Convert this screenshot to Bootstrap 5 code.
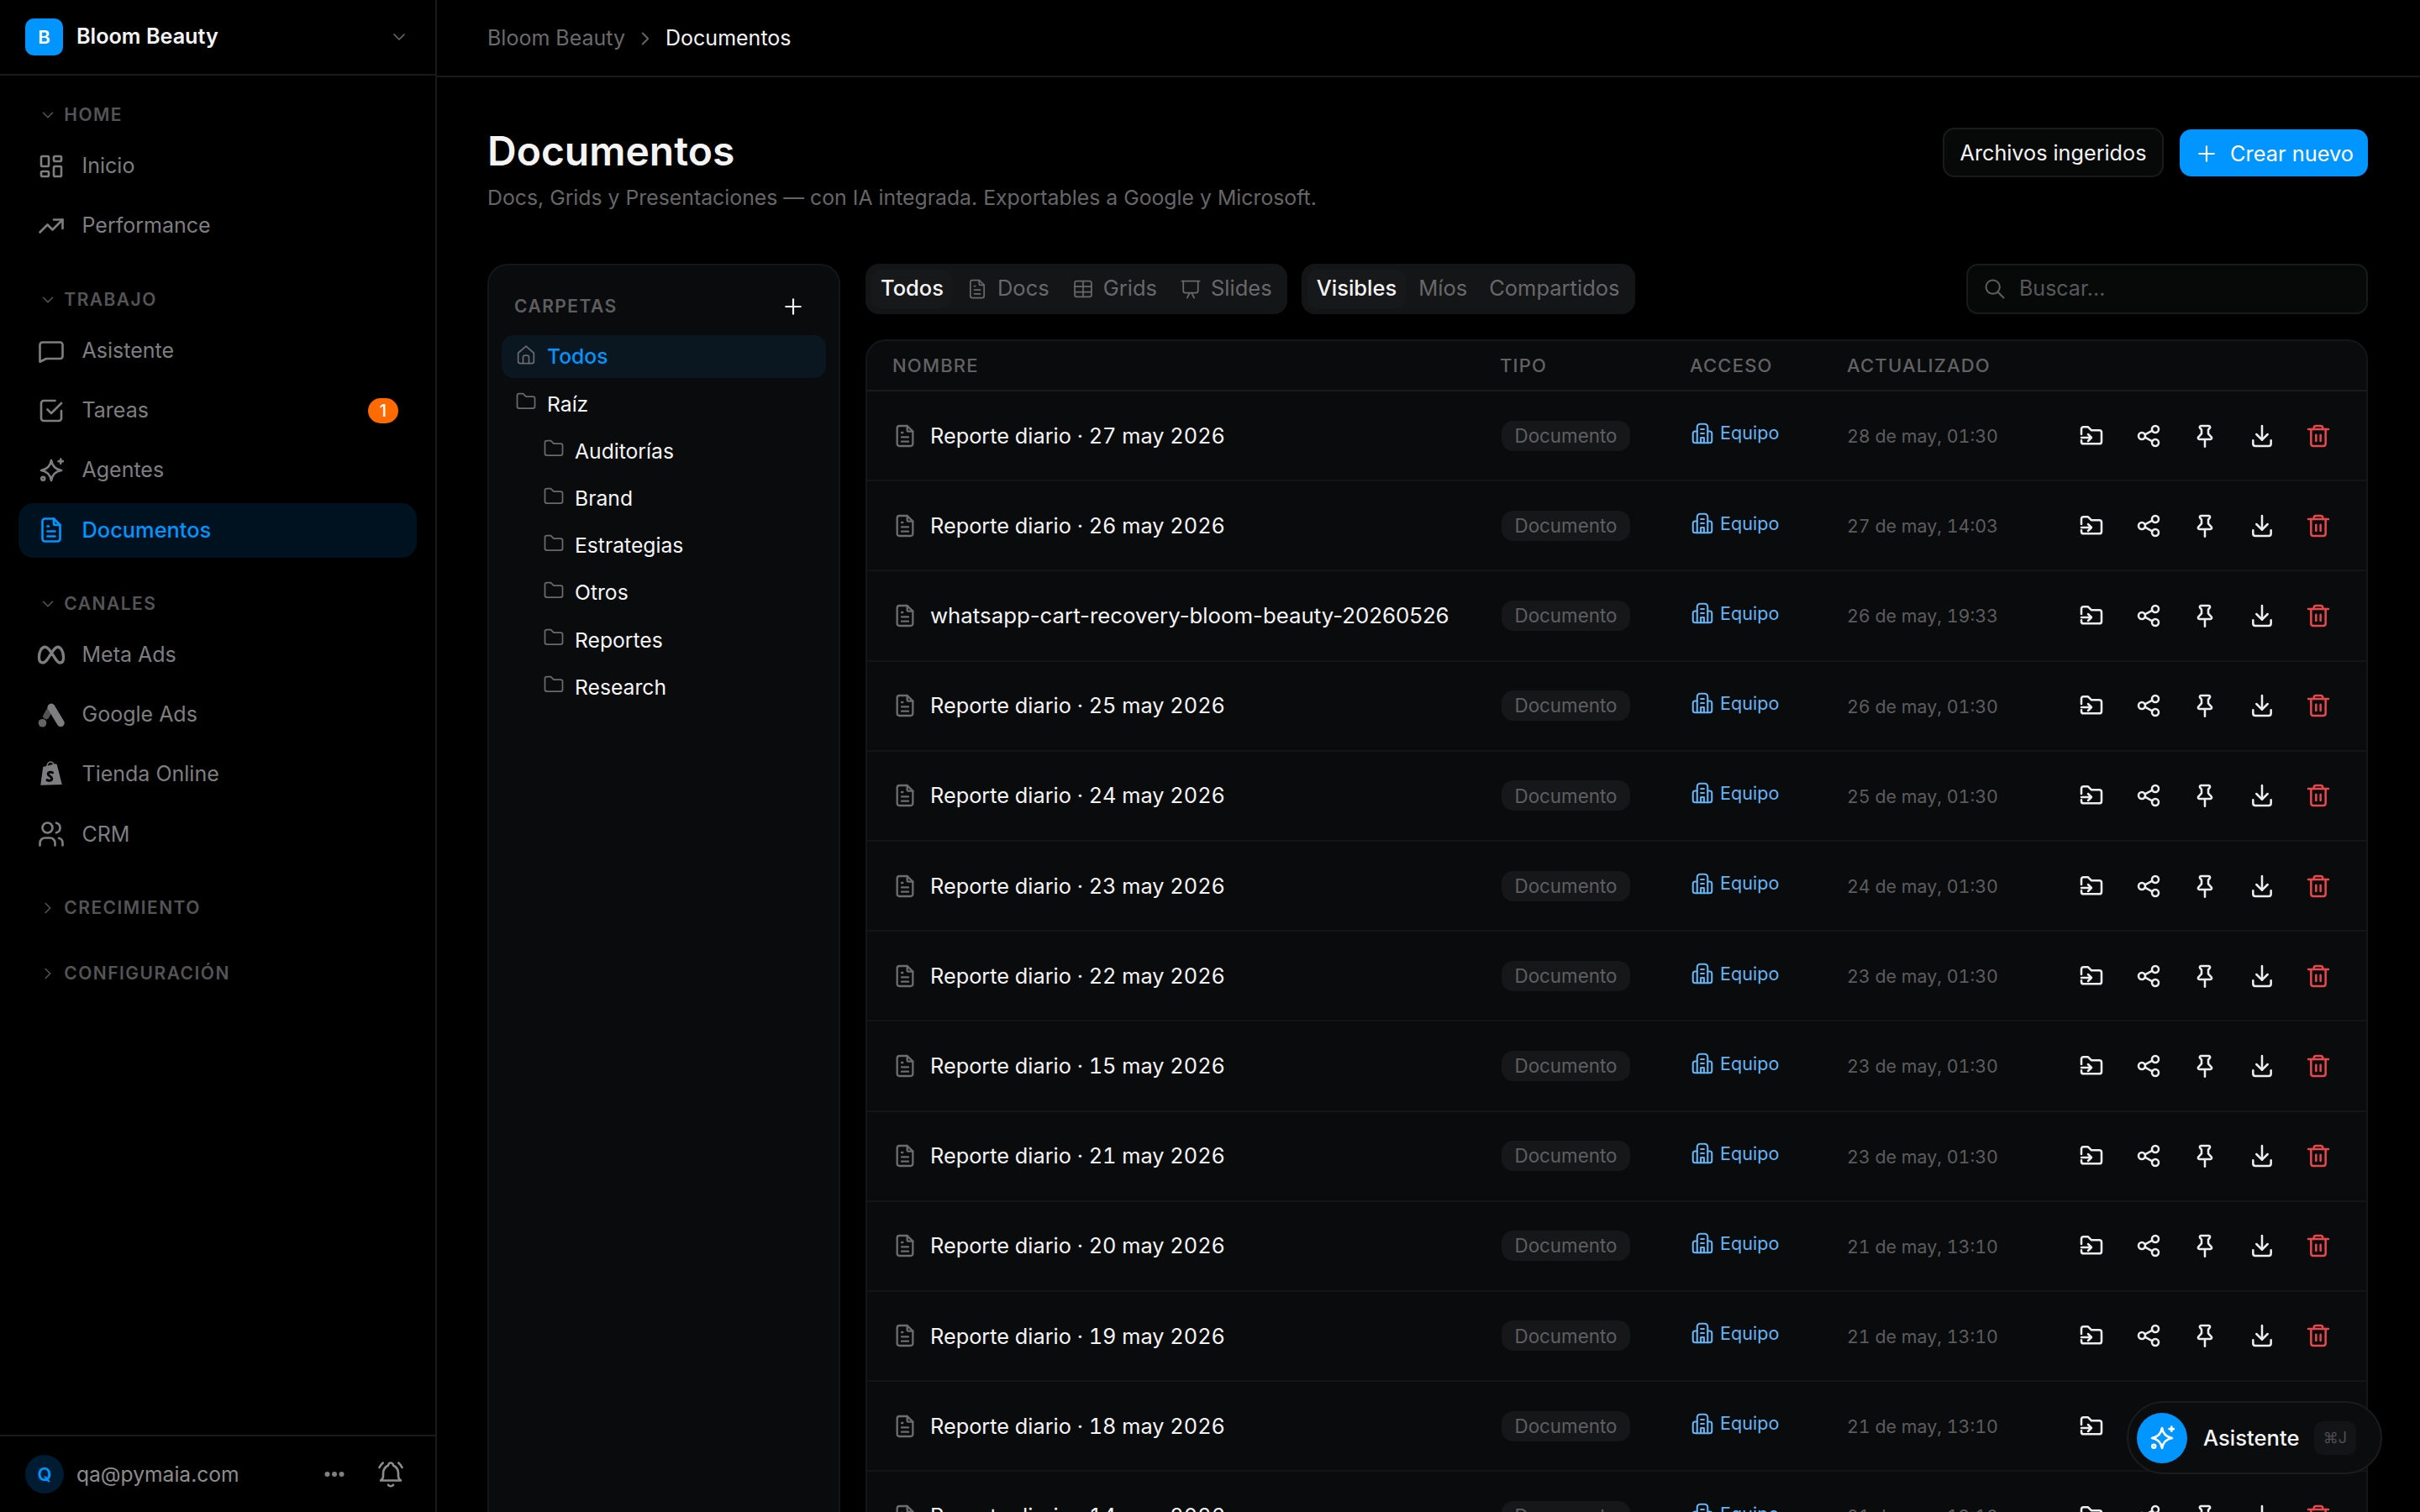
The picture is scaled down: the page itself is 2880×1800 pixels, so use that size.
<!DOCTYPE html>
<html lang="es">
<head>
  <meta charset="UTF-8" />
  <title>Documentos - Bloom Beauty</title>
  <link rel="stylesheet" href="https://cdn.jsdelivr.net/npm/bootstrap@5.3.0/dist/css/bootstrap.min.css"/>
  <style>
    :root {
      --line: #1a1a1b;
      --panel: #0a0b0d;
      --blue: #0095ff;
      --muted: #666668;
    }
    html, body { background: #000; }
    body {
      font-family: Inter, "Liberation Sans", sans-serif;
      color: #f4f4f5;
      font-size: 26px;
      height: 100vh;
      overflow: hidden;
    }
    .ico {
      width: 36px; height: 36px; flex: none;
      fill: none; stroke: currentColor; stroke-width: 1.75;
      stroke-linecap: round; stroke-linejoin: round;
    }

    /* sidebar */
    .side { width: 520px; flex: none; border-right: 2px solid var(--line); }
    .brand-bar { height: 90px; flex: none; padding: 0 31px 0 30px; border-bottom: 2px solid var(--line); }
    .brand-logo {
      width: 45px; height: 44px; border-radius: 10px; background: var(--blue);
      font-size: 22px; font-weight: 600; color: #fff;
    }
    .brand-name { font-size: 25.2px; font-weight: 600; margin-left: 16px; }
    .side-nav { padding: 27px 22px 0; }
    .nav-group + .nav-group { margin-top: 35px; }
    .nav-group.pushed { margin-top: 38px; }
    .group-label {
      height: 40px; padding-left: 24px; gap: 8.3px; margin-bottom: 8.5px;
      color: #545456; font-size: 21px; font-weight: 600; letter-spacing: .07em;
    }
    .group-label .ico { width: 22px; height: 22px; }
    .side-item {
      height: 65px; padding: 0 21px; gap: 18.5px; margin-bottom: 6.2px;
      border-radius: 18px; color: #7e7e80; font-size: 25px; text-decoration: none;
    }
    .side-item.on { background: #00121f; color: var(--blue); font-weight: 500; font-size: 25.4px; }
    .count-pill {
      width: 36px; height: 30px; border-radius: 15px; background: #ff6b00;
      color: #fff; font-size: 20px; font-weight: 500; margin-right: 1px;
    }
    .side-foot { height: 92px; flex: none; padding: 0 35px 0 30px; border-top: 2px solid var(--line); color: #8c8c8e; font-size: 24.6px; }
    .user-dot {
      width: 46px; height: 46px; border-radius: 50%; background: #001c33;
      color: var(--blue); font-size: 22px; font-weight: 600; margin-right: 15px;
    }
    .more-dots { margin-right: 37px; }

    /* top */
    .crumbs { height: 92px; flex: none; padding: 1px 60px 0; border-bottom: 2px solid var(--line); font-size: 25px; gap: 11px; }
    .crumbs .ico { width: 26px; height: 26px; color: #666; }
    .page-body { padding: 60px 62px 0 60px; }
    .page-title { font-size: 48px; font-weight: 600; line-height: 56px; margin: 0 0 9px; }
    .page-sub { font-size: 24.8px; color: var(--muted); margin: 0; line-height: 36px; }
    .btn-ghost, .btn-create {
      line-height: 1; border-radius: 14px; padding: 2px 0 0;
      display: inline-flex; align-items: center; justify-content: center; white-space: nowrap;
    }
    .btn-ghost { height: 59px; width: 263px; font-size: 25.2px; background: #070909; border: 2px solid var(--line); color: #f4f4f5; }
    .btn-create { height: 56px; width: 224px; font-size: 25.4px; background: var(--blue); border: 0; color: #fff; gap: 13px; }
    .btn-create .ico { width: 30px; height: 30px; }

    /* carpetas */
    .folders-panel {
      width: 420px; flex: none; background: var(--panel);
      border: 2px solid #151618; border-bottom: 0; border-radius: 24px 24px 0 0;
      padding: 0 15px;
    }
    .folders-head { height: 83px; padding: 16px 24px 0 15px; color: #5e5e60; font-size: 21px; font-weight: 600; letter-spacing: .07em; }
    .folders-head .ico { width: 30px; height: 30px; color: #f4f4f5; }
    .folder-row { height: 51px; margin-bottom: 5.2px; padding: 2px 0 0 15px; gap: 11px; border-radius: 14px; font-size: 24.7px; }
    .folder-row .ico { width: 28px; height: 28px; color: #6a6a6c; stroke-width: 1.5; margin-top: -6px; }
    .folder-row.on { background: #0a1620; color: var(--blue); font-weight: 500; }
    .folder-row.sub { padding-left: 48px; }

    /* filtros */
    .seg-group { height: 60px; padding: 0 7px; gap: 7px; background: #141517; border-radius: 16px; }
    .seg-group.tight { gap: 4px; margin-left: 17px; }
    .seg-btn { height: 46px; padding: 0 11px; gap: 10px; border-radius: 12px; color: #68686a; font-size: 25.5px; }
    .seg-btn .ico { width: 28px; height: 28px; margin-left: -3px; stroke-width: 1.5; }
    .seg-btn.on { background: #17181a; color: #f4f4f5; font-weight: 500; }
    .search-box {
      width: 478px; height: 60px; padding: 0 18px; gap: 13px;
      background: #070909; border: 2px solid var(--line); border-radius: 14px;
    }
    .search-box .ico { width: 28px; height: 28px; color: #5e5e60; }
    .search-box input { background: transparent; border: 0; outline: 0; color: #fff; font-size: 25px; width: 100%; padding-top: 2px; }
    .search-box input::placeholder { color: #58585a; }

    /* tabla */
    .docs-wrap { background: var(--panel); border: 2px solid #151618; border-bottom: 0; border-radius: 24px 24px 0 0; margin-top: 30px; }
    .doc-line { display: grid; grid-template-columns: 753px 226px 187px 257px 1fr; align-items: center; }
    .doc-head { height: 60.5px; padding-top: 2px; border-bottom: 2px solid var(--line); color: #626264; font-size: 22px; font-weight: 500; letter-spacing: .055em; }
    .doc-head > div:first-child { padding-left: 30px; }
    .doc-row { height: 107.2px; border-bottom: 2px solid #141517; }
    .doc-name { padding-left: 29px; gap: 14px; font-size: 25.8px; }
    .doc-name.tabular { font-size: 25.3px; font-variant-numeric: tabular-nums; }
    .doc-name .ico { width: 32px; height: 32px; color: #6d6d6f; }
    .type-pill { width: 153px; height: 36px; margin-left: 2px; border-radius: 14px; background: #161718; color: #5f5f61; font-size: 22.4px; }
    .access-tag { gap: 6px; color: #62b4f5; font-size: 21.6px; margin-top: -6px; }
    .access-tag .ico { width: 30px; height: 30px; stroke-width: 1.7; }
    .doc-date { color: #5c5c5e; font-size: 21.4px; font-variant-numeric: tabular-nums; padding-top: 1px; }
    .doc-tools { padding-left: 8px; gap: 15.5px; }
    .tool-btn { width: 52px; height: 52px; color: #eeeeef; }
    .tool-btn .ico { width: 32px; height: 32px; stroke-width: 1.9; }
    .tool-btn.del { color: #e5484d; }

    /* asistente flotante */
    .assistant-fab {
      position: fixed; left: 2531px; top: 1668px; width: 304px; height: 87px;
      padding: 0 30px 0 10px; background: #0b0c0e; border: 2px solid #1b1c1e; border-radius: 44px;
    }
    .assistant-fab .fab-dot { width: 60px; height: 60px; border-radius: 50%; background: var(--blue); color: #fff; margin-right: 19px; }
    .assistant-fab .fab-dot .ico { width: 36px; height: 36px; }
    .assistant-fab span.fab-text { font-size: 25.6px; font-weight: 500; padding-top: 2px; }
    .fab-key {
      width: 50px; height: 40px; margin-left: auto; margin-right: -1px; border-radius: 10px;
      background: #131416; color: #4e4e50; font-size: 18px;
    }
  </style>
</head>
<body>
  <svg class="d-none" xmlns="http://www.w3.org/2000/svg">
    <symbol id="i-down" viewBox="0 0 24 24"><path d="M6 9l6 6l6 -6"/></symbol>
    <symbol id="i-right" viewBox="0 0 24 24"><path d="M9 6l6 6l-6 6"/></symbol>
    <symbol id="i-dash" viewBox="0 0 24 24"><path d="M5 4h4a1 1 0 0 1 1 1v6a1 1 0 0 1 -1 1h-4a1 1 0 0 1 -1 -1v-6a1 1 0 0 1 1 -1"/><path d="M5 16h4a1 1 0 0 1 1 1v2a1 1 0 0 1 -1 1h-4a1 1 0 0 1 -1 -1v-2a1 1 0 0 1 1 -1"/><path d="M15 12h4a1 1 0 0 1 1 1v6a1 1 0 0 1 -1 1h-4a1 1 0 0 1 -1 -1v-6a1 1 0 0 1 1 -1"/><path d="M15 4h4a1 1 0 0 1 1 1v2a1 1 0 0 1 -1 1h-4a1 1 0 0 1 -1 -1v-2a1 1 0 0 1 1 -1"/></symbol>
    <symbol id="i-trend" viewBox="0 0 24 24"><path d="M3 17l6 -6l4 4l8 -8"/><path d="M14 7h7v7"/></symbol>
    <symbol id="i-chat" viewBox="0 0 24 24"><path d="M5 5h14a2 2 0 0 1 2 2v9a2 2 0 0 1 -2 2h-11l-5 2.500v-13.500a2 2 0 0 1 2 -2z"/></symbol>
    <symbol id="i-check" viewBox="0 0 24 24"><path d="M9 11l3 3l8 -8"/><path d="M20 12v6a2 2 0 0 1 -2 2h-12a2 2 0 0 1 -2 -2v-12a2 2 0 0 1 2 -2h9"/></symbol>
    <symbol id="i-spark" viewBox="0 0 24 24"><path d="M12 4c.8 4.800 3.200 7.200 8 8c-4.800 .8 -7.200 3.200 -8 8c-.8 -4.800 -3.200 -7.200 -8 -8c4.800 -.8 7.200 -3.200 8 -8z"/><path d="M19.500 3v3.500M17.750 4.750h3.500"/><circle cx="5.500" cy="18.500" r="1.300"/></symbol>
    <symbol id="i-doc" viewBox="0 0 24 24"><path d="M14 3v4a1 1 0 0 0 1 1h4"/><path d="M17 21h-10a2 2 0 0 1 -2 -2v-14a2 2 0 0 1 2 -2h7l5 5v11a2 2 0 0 1 -2 2z"/><path d="M9 9h1M9 13h6M9 17h6"/></symbol>
    <symbol id="i-meta" viewBox="0 0 24 24"><path stroke-width="2.200" d="M12 10c-1.800 -3 -3.300 -4.500 -5 -4.500c-2.800 0 -4.700 4 -4.700 8.200c0 2.800 1.300 4.300 3.100 4.300c2 0 3.600 -2.500 6.600 -7.500c2.200 -3.500 3.500 -5 5.100 -5c2.700 0 4.600 4 4.600 8.500c0 2.600 -1.200 4 -2.900 4c-1.800 0 -3.300 -2.500 -6.800 -8.500z"/></symbol>
    <symbol id="i-gads" viewBox="0 0 24 24"><path stroke-width="6" d="M12 6l7.500 12.500"/><path stroke-width="5" opacity=".65" d="M12 6l-4 7"/><circle cx="5" cy="18.500" r="3.200" fill="currentColor" stroke="none" opacity=".8"/></symbol>
    <symbol id="i-shop" viewBox="0 0 24 24"><path fill="currentColor" stroke="none" d="M3.500 20.500l2 -14.500l9.500 -2.500l1.500 .5l4 16z"/><path stroke-width="1" d="M8.500 6c.3 -2.500 1.500 -4 3 -4s2.500 1.500 2.500 3.500"/><path stroke="#000" stroke-width="2" d="M13 10.500c-1.500 -.8 -3.500 -.3 -3.500 1.200c0 1.600 3 1.600 3 3.400c0 1.700 -2 2.200 -3.800 1.300"/></symbol>
    <symbol id="i-users" viewBox="0 0 24 24"><path d="M5 7a4 4 0 1 0 8 0a4 4 0 0 0 -8 0"/><path d="M3 21v-2a4 4 0 0 1 4 -4h4a4 4 0 0 1 4 4v2"/><path d="M16 3.130a4 4 0 0 1 0 7.750"/><path d="M21 21v-2a4 4 0 0 0 -3 -3.850"/></symbol>
    <symbol id="i-bell" viewBox="0 0 24 24"><path d="M10 5a2 2 0 0 1 4 0a7 7 0 0 1 4 6v3a4 4 0 0 0 2 3h-16a4 4 0 0 0 2 -3v-3a7 7 0 0 1 4 -6"/><path d="M10 20.500a2.500 2.500 0 0 0 4 0"/><path d="M21 6.700a11 11 0 0 0 -2.800 -3.700"/><path d="M3 6.700a11 11 0 0 1 2.800 -3.700"/></symbol>
    <symbol id="i-folder" viewBox="0 0 24 24"><path d="M5 4h4l3 3h7a2 2 0 0 1 2 2v8a2 2 0 0 1 -2 2h-14a2 2 0 0 1 -2 -2v-11a2 2 0 0 1 2 -2"/></symbol>
    <symbol id="i-home" viewBox="0 0 24 24"><path d="M4 10.500l8 -7l8 7v8.500a2 2 0 0 1 -2 2h-12a2 2 0 0 1 -2 -2z"/><path d="M9 21v-6a2 2 0 0 1 2 -2h2a2 2 0 0 1 2 2v6"/></symbol>
    <symbol id="i-plus" viewBox="0 0 24 24"><path d="M12 5v14M5 12h14"/></symbol>
    <symbol id="i-grid" viewBox="0 0 24 24"><rect x="3.500" y="4" width="17" height="16" rx="2"/><path d="M3.500 9.500h17M3.500 15h17M12 4v16"/></symbol>
    <symbol id="i-slide" viewBox="0 0 24 24"><path d="M3 4h18"/><path d="M4.500 4v10a2 2 0 0 0 2 2h11a2 2 0 0 0 2 -2v-10"/><path d="M11 16l-2.500 5M13 16l2.500 5"/></symbol>
    <symbol id="i-search" viewBox="0 0 24 24"><path d="M3 10a7 7 0 1 0 14 0a7 7 0 1 0 -14 0"/><path d="M21 21l-6 -6"/></symbol>
    <symbol id="i-move" viewBox="0 0 24 24"><path d="M3 10.500v-4.500a2 2 0 0 1 2 -2h4l3 3h7a2 2 0 0 1 2 2v8a2 2 0 0 1 -2 2h-14a2 2 0 0 1 -2 -2v-1"/><path d="M3 13.500h9M9 10.500l3 3l-3 3"/></symbol>
    <symbol id="i-share" viewBox="0 0 24 24"><path d="M3 12a3 3 0 1 0 6 0a3 3 0 1 0 -6 0"/><path d="M15 6a3 3 0 1 0 6 0a3 3 0 1 0 -6 0"/><path d="M15 18a3 3 0 1 0 6 0a3 3 0 1 0 -6 0"/><path d="M8.700 10.700l6.600 -3.400"/><path d="M8.700 13.300l6.600 3.400"/></symbol>
    <symbol id="i-pin" viewBox="0 0 24 24"><path d="M8.500 3h7a1.200 1.200 0 0 1 .8 2l-1.300 1.500v3.500l2.800 3a1.200 1.200 0 0 1 -.9 2h-9.800a1.200 1.200 0 0 1 -.9 -2l2.800 -3v-3.500l-1.300 -1.500a1.200 1.200 0 0 1 .8 -2z"/><path d="M12 15.500v6"/></symbol>
    <symbol id="i-save" viewBox="0 0 24 24"><path d="M4 16v3a2 2 0 0 0 2 2h12a2 2 0 0 0 2 -2v-3"/><path d="M7 10.500l5 5l5 -5"/><path d="M12 3v12.500"/></symbol>
    <symbol id="i-trash" viewBox="0 0 24 24"><path d="M3 6h18"/><path d="M8 6v-1a2 2 0 0 1 2 -2h4a2 2 0 0 1 2 2v1"/><path d="M5.500 6v13a2 2 0 0 0 2 2h9a2 2 0 0 0 2 -2v-13"/><path d="M10 11v5.500M14 11v5.500"/></symbol>
    <symbol id="i-team" viewBox="0 0 24 24"><path d="M7 21v-15a3 3 0 0 1 3 -3h4a3 3 0 0 1 3 3v15"/><path d="M7 10h-2a2 2 0 0 0 -2 2v7a2 2 0 0 0 2 2h14a2 2 0 0 0 2 -2v-7a2 2 0 0 0 -2 -2h-2"/><path d="M10.500 8h3M10.500 12h3M10.500 21v-5h3v5"/></symbol>
  </svg>

  <div class="d-flex vh-100 overflow-hidden">
    <aside class="side d-flex flex-column">
      <div class="brand-bar d-flex align-items-center">
        <div class="brand-logo d-flex align-items-center justify-content-center">B</div>
        <div class="brand-name">Bloom Beauty</div>
        <svg class="ico ms-auto" style="width:24px;height:24px;color:#666"><use href="#i-down"/></svg>
      </div>

      <nav class="side-nav flex-grow-1" id="sideNav"></nav>

      <div class="side-foot d-flex align-items-center">
        <div class="user-dot d-flex align-items-center justify-content-center">Q</div>
        <div>qa@pymaia.com</div>
        <svg class="more-dots ms-auto" width="24" height="8" viewBox="0 0 24 8" fill="#808082"><circle cx="3.500" cy="4" r="3"/><circle cx="12" cy="4" r="3"/><circle cx="20.500" cy="4" r="3"/></svg>
        <svg class="ico"><use href="#i-bell"/></svg>
      </div>
    </aside>

    <main class="flex-grow-1 d-flex flex-column overflow-hidden">
      <div class="crumbs d-flex align-items-center">
        <span style="color:#6a6a6c">Bloom Beauty</span>
        <svg class="ico"><use href="#i-right"/></svg>
        <span>Documentos</span>
      </div>

      <div class="page-body flex-grow-1 overflow-hidden">
        <div class="d-flex justify-content-between align-items-start" style="margin-bottom:60.5px">
          <div>
            <h1 class="page-title">Documentos</h1>
            <p class="page-sub">Docs, Grids y Presentaciones — con IA integrada. Exportables a Google y Microsoft.</p>
          </div>
          <div class="d-flex align-items-center" style="gap:19px">
            <button class="btn btn-ghost">Archivos ingeridos</button>
            <button class="btn btn-create"><svg class="ico"><use href="#i-plus"/></svg>Crear nuevo</button>
          </div>
        </div>

        <div class="d-flex" style="gap:30px">
          <div class="folders-panel">
            <div class="folders-head d-flex align-items-center justify-content-between">
              <span>CARPETAS</span>
              <svg class="ico"><use href="#i-plus"/></svg>
            </div>
            <div id="folderList"></div>
          </div>

          <div class="flex-grow-1">
            <div class="d-flex align-items-center">
              <div class="seg-group d-flex align-items-center">
                <div class="seg-btn on d-flex align-items-center">Todos</div>
                <div class="seg-btn d-flex align-items-center"><svg class="ico"><use href="#i-doc"/></svg>Docs</div>
                <div class="seg-btn d-flex align-items-center"><svg class="ico"><use href="#i-grid"/></svg>Grids</div>
                <div class="seg-btn d-flex align-items-center"><svg class="ico"><use href="#i-slide"/></svg>Slides</div>
              </div>
              <div class="seg-group tight d-flex align-items-center">
                <div class="seg-btn on d-flex align-items-center">Visibles</div>
                <div class="seg-btn d-flex align-items-center">Míos</div>
                <div class="seg-btn d-flex align-items-center">Compartidos</div>
              </div>
              <label class="search-box d-flex align-items-center ms-auto mb-0">
                <svg class="ico"><use href="#i-search"/></svg>
                <input type="text" placeholder="Buscar..."/>
              </label>
            </div>

            <div class="docs-wrap">
              <div class="doc-line doc-head">
                <div>NOMBRE</div><div>TIPO</div><div>ACCESO</div><div>ACTUALIZADO</div><div></div>
              </div>
              <div id="docRows"></div>
            </div>
          </div>
        </div>
      </div>
    </main>
  </div>

  <div class="assistant-fab d-flex align-items-center">
    <div class="fab-dot d-flex align-items-center justify-content-center"><svg class="ico"><use href="#i-spark"/></svg></div>
    <span class="fab-text">Asistente</span>
    <span class="fab-key d-flex align-items-center justify-content-center">⌘J</span>
  </div>

  <script>
const ico = name => `<svg class="ico"><use href="#i-${name}"/></svg>`;

// Sidebar
const navGroups = [
  { label: 'HOME', open: true, items: [['dash', 'Inicio'], ['trend', 'Performance']] },
  { label: 'TRABAJO', open: true, items: [['chat', 'Asistente'], ['check', 'Tareas', 1], ['spark', 'Agentes'], ['doc', 'Documentos']] },
  { label: 'CANALES', open: true, items: [['meta', 'Meta Ads'], ['gads', 'Google Ads'], ['shop', 'Tienda Online'], ['users', 'CRM']] },
  { label: 'CRECIMIENTO', open: false, items: [] },
  { label: 'CONFIGURACIÓN', open: false, items: [] }
];
document.getElementById('sideNav').innerHTML = navGroups.map(group => `
  <div class="nav-group ${group.label === 'CONFIGURACIÓN' ? 'pushed' : ''}">
    <div class="group-label d-flex align-items-center">${ico(group.open ? 'down' : 'right')}${group.label}</div>
    ${group.items.map(([icon, text, count]) => `
      <a href="#" class="side-item d-flex align-items-center ${text === 'Documentos' ? 'on' : ''}">
        ${ico(icon)}<span>${text}</span>
        ${count ? `<span class="count-pill ms-auto d-flex align-items-center justify-content-center">${count}</span>` : ''}
      </a>`).join('')}
  </div>`).join('');

// Carpetas
const folders = ['Auditorías', 'Brand', 'Estrategias', 'Otros', 'Reportes', 'Research'];
document.getElementById('folderList').innerHTML =
  `<div class="folder-row on d-flex align-items-center">${ico('home')}Todos</div>
   <div class="folder-row d-flex align-items-center">${ico('folder')}Raíz</div>` +
  folders.map(f => `<div class="folder-row sub d-flex align-items-center">${ico('folder')}${f}</div>`).join('');

// Documentos
const docs = [
  ['Reporte diario · 27 may 2026', '28 de may, 01:30'],
  ['Reporte diario · 26 may 2026', '27 de may, 14:03'],
  ['whatsapp-cart-recovery-bloom-beauty-20260526', '26 de may, 19:33'],
  ['Reporte diario · 25 may 2026', '26 de may, 01:30'],
  ['Reporte diario · 24 may 2026', '25 de may, 01:30'],
  ['Reporte diario · 23 may 2026', '24 de may, 01:30'],
  ['Reporte diario · 22 may 2026', '23 de may, 01:30'],
  ['Reporte diario · 15 may 2026', '23 de may, 01:30'],
  ['Reporte diario · 21 may 2026', '23 de may, 01:30'],
  ['Reporte diario · 20 may 2026', '21 de may, 13:10'],
  ['Reporte diario · 19 may 2026', '21 de may, 13:10'],
  ['Reporte diario · 18 may 2026', '21 de may, 13:10'],
  ['Reporte diario · 14 may 2026', '21 de may, 13:10']
];
const tools = ['move', 'share', 'pin', 'save', 'trash'];
document.getElementById('docRows').innerHTML = docs.map(([name, date]) => `
  <div class="doc-line doc-row">
    <div class="doc-name d-flex align-items-center ${name.includes('·') ? 'tabular' : ''}">${ico('doc')}<span>${name}</span></div>
    <div><span class="type-pill d-flex align-items-center justify-content-center">Documento</span></div>
    <div class="access-tag d-flex align-items-center">${ico('team')}<span>Equipo</span></div>
    <div class="doc-date">${date}</div>
    <div class="doc-tools d-flex align-items-center">
      ${tools.map(t => `<div class="tool-btn d-flex align-items-center justify-content-center ${t === 'trash' ? 'del' : ''}">${ico(t)}</div>`).join('')}
    </div>
  </div>`).join('');
  </script>
  <script src="https://cdn.jsdelivr.net/npm/bootstrap@5.3.0/dist/js/bootstrap.bundle.min.js"></script>
</body>
</html>
